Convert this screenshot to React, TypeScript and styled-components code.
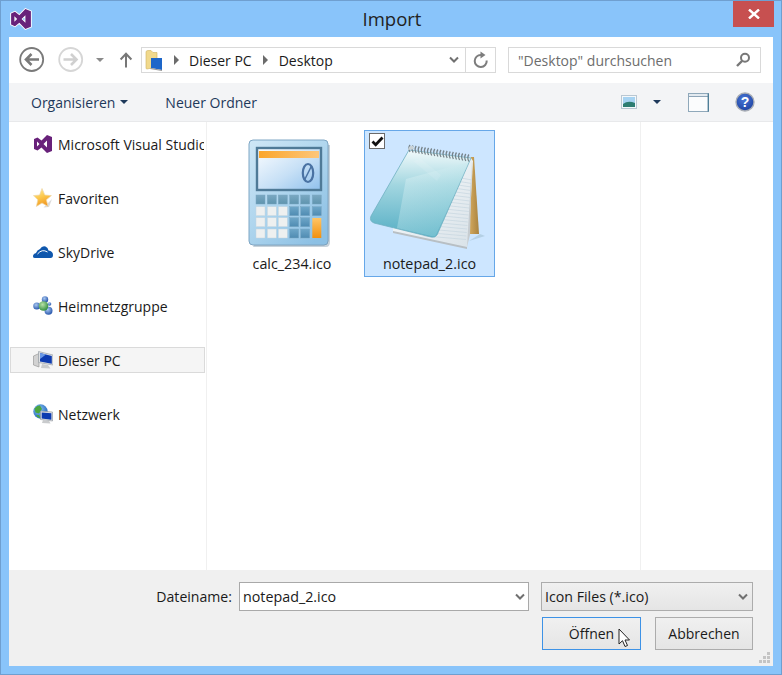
import React from "react";
import styled, { createGlobalStyle } from "styled-components";

const Global = createGlobalStyle`
  html, body { margin: 0; padding: 0; background: #fff; }
  body { font-family: "Open Sans", "Noto Sans", sans-serif; font-size: 14px; color: #1a1a1a; }
`;

const Win = styled.div`
  width: 782px; height: 675px; box-sizing: border-box; background: #89c4fa;
  border: 1px solid #6f9fd0; display: flex; flex-direction: column;
`;
const TitleBar = styled.div`
  height: 36px; flex: none; display: flex; align-items: flex-start; position: relative;
`;
const TitleIcon = styled.div`
  position: absolute; left: 9px; top: 7px; width: 22px; height: 22px; display: flex;
`;
const TitleText = styled.div`
  flex: 1; text-align: center; font-size: 18.5px; line-height: 36px; color: #222; padding-left: 2px;
`;
const CloseBtn = styled.div`
  position: absolute; right: 7px; top: 0; width: 41px; height: 26px; background: #c75050;
  display: flex; align-items: center; justify-content: center;
`;
const Client = styled.div`
  margin: 0 8px 8px 8px; flex: 1; min-height: 0; background: #fff; display: flex; flex-direction: column;
`;
const NavBar = styled.div`
  height: 46px; flex: none; display: flex; align-items: center; padding: 0 0 0 10px;
`;
const NavIcon = styled.div<{ $w: number; $ml?: number; $mr?: number }>`
  width: ${(p) => p.$w}px; height: 24px; margin-left: ${(p) => p.$ml ?? 0}px; margin-right: ${(p) => p.$mr ?? 0}px; flex: none;
  display: flex; align-items: center; justify-content: center;
`;
const Field = styled.div`
  height: 26px; box-sizing: border-box; border: 1px solid #d9d9d9; display: flex; align-items: center; background: #fff;
`;
const AddressField = styled(Field)`
  width: 355px; margin-left: 8px; flex: none;
`;
const Crumb = styled.span<{ $ml?: number }>`
  font-size: 14px; color: #1a1a1a; margin-right: 11px; margin-left: ${(p) => p.$ml ?? 0}px; white-space: nowrap;
`;
const CrumbArrow = styled.span<{ $mr?: number }>`
  width: 0; height: 0; border-left: 5px solid #6b6b6b; border-top: 5px solid transparent; border-bottom: 5px solid transparent;
  margin-right: ${(p) => p.$mr ?? 11}px; flex: none;
`;
const Spacer = styled.div`flex: 1;`;
const RefreshCell = styled.div`
  width: 29px; height: 24px; border-left: 1px solid #d9d9d9; display: flex; align-items: center; justify-content: center; flex: none;
`;
const SearchField = styled(Field)`
  width: 253px; margin-left: 12px; flex: none; padding: 0 9px 0 9px; color: #6d6d6d; font-size: 14px;
`;
const CommandBar = styled.div`
  height: 38px; flex: none; background: #f3f4f6; border-bottom: 1px solid #e8e9eb; display: flex; align-items: center; padding-left: 22px;
`;
const Command = styled.span<{ $ml?: number }>`
  font-size: 14px; color: #1e395b; white-space: nowrap; margin-left: ${(p) => p.$ml ?? 0}px;
`;
const Caret = styled.span<{ $ml: number; $c?: string }>`
  width: 0; height: 0; border-top: 4px solid ${(p) => p.$c ?? "#1e395b"}; border-left: 4px solid transparent; border-right: 4px solid transparent;
  margin-left: ${(p) => p.$ml}px; flex: none;
`;
const ToolIcon = styled.div<{ $ml: number; $mr?: number }>`
  margin-left: ${(p) => p.$ml}px; margin-right: ${(p) => p.$mr ?? 0}px; display: flex; flex: none;
`;
const Body = styled.div`
  flex: 1; min-height: 0; display: flex;
`;
const Sidebar = styled.div`
  width: 197px; flex: none; border-right: 1px solid #f0f0f0; padding-top: 9px; display: flex; flex-direction: column; gap: 28px; overflow: hidden;
`;
const SideItem = styled.div<{ $sel?: boolean }>`
  height: 26px; box-sizing: border-box; margin-left: 1px; width: 195px; display: flex; align-items: center; padding-left: 22px;
  border: 1px solid ${(p) => (p.$sel ? "#dadada" : "transparent")}; background: ${(p) => (p.$sel ? "#f5f5f5" : "transparent")};
  white-space: nowrap; overflow: hidden; font-size: 14px; color: #1a1a1a;
  span { margin-left: 5px; }
  svg { flex: none; }
`;
const Files = styled.div`
  width: 434px; box-sizing: border-box; flex: none; border-right: 1px solid #f0f0f0; padding: 8px 0 0 18px; display: flex; align-items: flex-start; gap: 8px;
`;
const FileTile = styled.div<{ $sel?: boolean }>`
  width: 131px; height: 147px; box-sizing: border-box; position: relative; display: flex; flex-direction: column; align-items: center;
  border: 1px solid ${(p) => (p.$sel ? "#66a7e8" : "transparent")}; background: ${(p) => (p.$sel ? "#cde6ff" : "transparent")};
  svg { flex: none; }
`;
const CalcSlot = styled.div`
  margin: 8px 3px 0 0; display: flex;
`;
const FileLabel = styled.div<{ $pl?: number }>`
  position: absolute; left: 0; right: 0; bottom: 3px; text-align: center; font-size: 14.3px; color: #1a1a1a; padding-left: ${(p) => p.$pl ?? 0}px;
`;
const Check = styled.div`
  position: absolute; left: 4px; top: 2px; width: 16px; height: 16px; box-sizing: border-box; border: 1px solid #6a6a6a; background: #fff;
  display: flex; align-items: center; justify-content: center;
`;
const Footer = styled.div`
  height: 96px; flex: none; background: #f0f0f0; position: relative; padding: 12px 20px 0 0; box-sizing: border-box; display: flex; flex-direction: column; align-items: flex-end; gap: 6px;
`;
const FooterRow = styled.div`
  display: flex; align-items: center;
`;
const FooterLabel = styled.span`
  font-size: 14.1px; color: #1a1a1a; margin-right: 7px;
`;
const NameInput = styled.div`
  width: 290px; height: 29px; box-sizing: border-box; border: 1px solid #a9a9a9; background: #fff; display: flex; align-items: center; justify-content: space-between;
  padding: 0 2px 0 3px; font-size: 14.3px; color: #1a1a1a;
`;
const FilterSelect = styled.div`
  width: 212px; height: 29px; box-sizing: border-box; border: 1px solid #acacac; margin-left: 12px; background: linear-gradient(#f0f0f0, #e5e5e5); display: flex; align-items: center; justify-content: space-between;
  padding: 0 3px 0 3px; font-size: 14.2px; color: #1a1a1a;
`;
const Btn = styled.div<{ $def?: boolean; $w: number; $ml?: number }>`
  width: ${(p) => p.$w}px; height: 33px; box-sizing: border-box; border: 1px solid ${(p) => (p.$def ? "#3d92e6" : "#acacac")};
  background: linear-gradient(#f0f0f0, #e5e5e5); display: flex; align-items: center; justify-content: center; margin-left: ${(p) => p.$ml ?? 0}px;
  font-size: 14px; color: #1a1a1a; position: relative;
`;
const Cursor = styled.div`
  position: absolute; left: 75px; top: 10px; display: flex;
`;
const Grip = styled.div`
  position: absolute; right: 2px; bottom: 2px; display: flex;
`;

const VS = ({ s = 18, outline }: { s?: number; outline?: boolean }) => (
  <svg width={s} height={s} viewBox="-1 -1 20 20">
    <path
      d="M13 0 L18 2 V16 L13 18 L7.5 12.5 L3.5 15.5 L0 14 V4 L3.5 2.5 L7.5 5.5 Z M13 5.5 L9.5 9 L13 12.5 Z M3 6.5 V11.5 L5.5 9 Z"
      fill="#68217a"
      fillRule="evenodd"
      stroke={outline ? "#fff" : "none"}
      strokeWidth={outline ? 1.6 : 0}
      style={{ paintOrder: "stroke" }}
    />
  </svg>
);
const Chevron = ({ c = "#707070" }: { c?: string }) => (
  <svg width="12" height="10" viewBox="0 0 12 10"><path d="M2 2.5 L6 6.5 L10 2.5" fill="none" stroke={c} strokeWidth="2" /></svg>
);
const BackCircle = () => (
  <svg width="26" height="26" viewBox="0 0 26 26">
    <circle cx="12.7" cy="12.5" r="11.5" fill="#fff" stroke="#7a7a7a" strokeWidth="1.8" />
    <path d="M20 12.5 H7.5 M12.5 7 L7 12.5 L12.5 18" fill="none" stroke="#7a7a7a" strokeWidth="2.6" />
  </svg>
);
const ForwardCircle = () => (
  <svg width="26" height="26" viewBox="0 0 26 26">
    <circle cx="12.7" cy="12.5" r="11.5" fill="#fff" stroke="#d6d6d6" strokeWidth="1.8" />
    <path d="M5.5 12.5 H18 M13 7 L18.5 12.5 L13 18" fill="none" stroke="#d0d0d0" strokeWidth="2.6" />
  </svg>
);
const Star = () => (
  <svg width="20" height="20" viewBox="0 0 20 20">
    <defs><linearGradient id="st" x1="0" y1="0" x2="0.4" y2="1"><stop offset="0" stopColor="#fff0a8" /><stop offset=".55" stopColor="#fcc84c" /><stop offset="1" stopColor="#f29a24" /></linearGradient></defs>
    <path d="M10.5 19.5 L16 19 L19 11 L13 17 Z" fill="#bbb" opacity=".55" />
    <path d="M9 0.5 L11.8 7 L18.4 7.6 L13.4 11.8 L15 18.4 L9 15 L3.4 18.4 L4.8 11.8 L0.5 7.6 L6.6 7 Z" fill="url(#st)" stroke="#efd7a6" strokeWidth=".7" />
  </svg>
);
const Cloud = () => (
  <svg width="20" height="14" viewBox="0 0 20 14">
    <path d="M0 11.5 Q0 8.5 3 8 Q4 5 7 4 Q9 0.5 12.5 1.5 Q15 2.5 15.5 5.5 Q20 6 20 10 Q20 13 17.5 13 H2 Q0 13 0 11.5 Z" fill="#0f57ad" />
    <path d="M4.5 9 Q9 3.5 14.5 7" fill="none" stroke="#fff" strokeWidth="1" />
  </svg>
);
const Home = () => (
  <svg width="20" height="20" viewBox="0 0 20 20">
    <defs>
      <radialGradient id="hb" cx=".4" cy=".35" r=".7"><stop offset="0" stopColor="#a9c8f0" /><stop offset="1" stopColor="#1f4fa8" /></radialGradient>
      <radialGradient id="hn" cx=".4" cy=".35" r=".7"><stop offset="0" stopColor="#b8e2a8" /><stop offset="1" stopColor="#2c8a3a" /></radialGradient>
    </defs>
    <circle cx="3.8" cy="10" r="3.6" fill="url(#hb)" />
    <circle cx="12" cy="3.4" r="3.2" fill="url(#hb)" />
    <circle cx="15.5" cy="14.8" r="4" fill="url(#hb)" />
    <circle cx="10.5" cy="10" r="4.8" fill="url(#hn)" />
    <circle cx="16.5" cy="8" r="1.8" fill="url(#hb)" />
  </svg>
);
const PC = () => (
  <svg width="20" height="20" viewBox="0 0 20 20">
    <path d="M0.5 6 L6 3.5 V17 L0.5 15 Z" fill="#d2d2d2" stroke="#8f8f8f" strokeWidth=".6" />
    <path d="M5.5 1.5 L20 5 V15 L5.5 12.5 Z" fill="#dfe1e4" stroke="#9aa0a8" strokeWidth=".7" />
    <path d="M7 3 L18.8 6 V13.8 L7 11.6 Z" fill="#0d3bb0" />
    <path d="M7 3 L13 4.5 L7 9 Z" fill="#6a98e6" />
    <path d="M9 14 L15 15 L17.5 18.5 L8 18 Z" fill="#c9cbcd" />
  </svg>
);
const Net = () => (
  <svg width="20" height="20" viewBox="0 0 20 20">
    <defs><radialGradient id="ng" cx=".4" cy=".35" r=".7"><stop offset="0" stopColor="#8ec6f4" /><stop offset="1" stopColor="#1b62ba" /></radialGradient></defs>
    <circle cx="7.5" cy="7.5" r="7.2" fill="url(#ng)" />
    <path d="M1.5 4.5 Q4.5 1 7 1.5 L9 5 L6 9.5 L2.5 8.5 Z M3 11 L6 11 L7.5 14.5 Q4.5 14 3 11 Z" fill="#4ca63f" />
    <path d="M7.5 7 L19.5 8 V17 L7.5 15.5 Z" fill="#dfe1e4" stroke="#8a9098" strokeWidth=".6" />
    <path d="M8.7 8.5 L18.4 9.2 V15.7 L8.7 14.5 Z" fill="#0d3bb0" />
    <path d="M10 16 L16 16.8 L17.5 19.5 L9 19 Z" fill="#c9cbcd" />
  </svg>
);
const keyXs = [8, 19.3, 30.3, 41.7, 52.7, 64.3];
const keyYs = [56, 67.7, 78.7, 90];
const Calc = () => (
  <svg width="82" height="110" viewBox="0 0 82 110">
    <defs>
      <linearGradient id="cb" x1="0" y1="0" x2="0.8" y2="1"><stop offset="0" stopColor="#cfe7f6" /><stop offset=".5" stopColor="#b0d6ee" /><stop offset="1" stopColor="#8cc0e4" /></linearGradient>
      <linearGradient id="cs" x1="0" y1="0" x2="1" y2="1"><stop offset="0" stopColor="#fbfdff" /><stop offset=".55" stopColor="#c7e0f6" /><stop offset="1" stopColor="#8fc0ec" /></linearGradient>
      <linearGradient id="ck" x1="0" y1="0" x2="0" y2="1"><stop offset="0" stopColor="#6ea6c8" /><stop offset="1" stopColor="#4f8bb2" /></linearGradient>
      <linearGradient id="cg" x1="0" y1="0" x2="0" y2="1"><stop offset="0" stopColor="#7aa8c2" /><stop offset="1" stopColor="#5f94ae" /></linearGradient>
      <linearGradient id="co" x1="0" y1="0" x2="0" y2="1"><stop offset="0" stopColor="#ffc566" /><stop offset="1" stopColor="#f1900f" /></linearGradient>
      <linearGradient id="cr" x1="0" y1="0" x2="1" y2="0"><stop offset="0" stopColor="#fba62c" /><stop offset="1" stopColor="#fdc67a" /></linearGradient>
    </defs>
    <rect x="1" y="1" width="79" height="105" rx="4" fill="url(#cb)" stroke="#7ea6c4" />
    <path d="M80 6 V102 Q80 106 76 106 H6 L5 108 H78 Q82 108 82 103 V6 Z" fill="#5d7f98" opacity=".35" />
    <rect x="9" y="9" width="64" height="42" fill="url(#cs)" stroke="#4f7a97" strokeWidth="2.4" />
    <rect x="11" y="12" width="60" height="7" fill="url(#cr)" />
    <ellipse cx="60" cy="34" rx="5.2" ry="9" fill="none" stroke="#4a72a3" strokeWidth="2.2" />
    <path d="M56.5 41 L63.5 27" stroke="#4a72a3" strokeWidth="1.5" />
    {keyYs.map((y, r) =>
      keyXs.map((x, c) => {
        if (c === 5 && r > 1) return null;
        const light = r > 0 && c < 3;
        const fill = light ? "#eef0f0" : r === 0 ? "url(#cg)" : "url(#ck)";
        return <rect key={`${r}-${c}`} x={x} y={y} width="9" height="9" fill={fill} stroke={light ? "#c4d4de" : "#7ba6c2"} strokeWidth=".5" />;
      })
    )}
    <rect x="64.3" y="79" width="9" height="20" fill="url(#co)" />
  </svg>
);
const Notepad = () => (
  <svg width="129" height="122" viewBox="0 0 129 122">
    <defs>
      <linearGradient id="nc" x1="0.35" y1="0" x2="0.35" y2="1"><stop offset="0" stopColor="#f2fafb" /><stop offset=".4" stopColor="#a2d6e0" /><stop offset="1" stopColor="#55aec4" /></linearGradient>
      <linearGradient id="no" x1="0.2" y1="0" x2="0.9" y2="1"><stop offset="0" stopColor="#e8f6f8" /><stop offset="1" stopColor="#8fd2dc" /></linearGradient>
      <linearGradient id="np" x1="0" y1="0" x2="1" y2="1"><stop offset="0" stopColor="#fbfdfe" /><stop offset="1" stopColor="#d9e2e8" /></linearGradient>
      <linearGradient id="nb" x1="0" y1="0" x2="1" y2="0"><stop offset="0" stopColor="#d9ae63" /><stop offset="1" stopColor="#a9833f" /></linearGradient>
    </defs>
    <path d="M106 26 L109 26 L114 103 L103 103 Z" fill="url(#nb)" />
    <path d="M115 103 L120 105 L104 110 Z" fill="#8faebf" opacity=".4" />
    <path d="M106 27 L108 30 L104 104 L102 117 L28 101 L28 96 Z" fill="url(#np)" />
    <path d="M28 100 L102 116 L102 118 L28 102 Z" fill="#b8bfc4" />
    <path d="M107 30 L102 116 L105 104 Z" fill="#c6ccd0" />
    {Array.from({ length: 18 }).map((_, i) => (
      <path key={i} d={`M${96 - i * 2.2} ${47 + i * 3.4} L${107 - i * 0.35} ${49 + i * 3.5}`} stroke="#c6d6df" strokeWidth=".7" />
    ))}
    <path d="M44 19 L106 27 L72 104 Q70 107 66 106 L9 92 Q4 90 6 85 Z" fill="url(#nc)" stroke="#6fb0c2" strokeWidth=".8" />
    <path d="M41 48 L104 31 L71 104 Q70 106 66 105 L32 97 Z" fill="url(#no)" opacity=".4" />
    <path d="M48 30 L72 50 L76 44 L56 28 Z" fill="#fff" opacity=".1" />
    {Array.from({ length: 20 }).map((_, i) => (
      <path key={i} d={`M${45 + i * 3.1} ${14 + i * 0.5} q-2.2 3 0 7`} fill="none" stroke="#76838a" strokeWidth="1.3" />
    ))}
    <path d="M43 19 Q44 14 48 15 L49 18 Z" fill="#c9d2d6" />
  </svg>
);
const Mag = () => (
  <svg width="16" height="16" viewBox="0 0 16 16">
    <circle cx="10" cy="5.8" r="4" fill="none" stroke="#777" strokeWidth="2" />
    <path d="M7 9 L2 14" stroke="#777" strokeWidth="2.4" />
  </svg>
);
const Refresh = () => (
  <svg width="16" height="18" viewBox="0 0 16 18">
    <path d="M13.7 9.5 A6 6 0 1 1 8 4" fill="none" stroke="#7d7d7d" strokeWidth="2" />
    <path d="M7.5 0.5 L12.5 4 L7.5 7.5 Z" fill="#7d7d7d" />
  </svg>
);
const UpArrow = () => (
  <svg width="14" height="16" viewBox="0 0 14 16"><path d="M7 15.5 V2 M1.6 7.5 L7 1.8 L12.4 7.5" fill="none" stroke="#777" strokeWidth="2" /></svg>
);
const FolderPC = () => (
  <svg width="18" height="22" viewBox="0 0 18 22">
    <path d="M1 3 Q1 1.5 3 1.5 L6 1.5 L8 3.5 L12 3.5 V18 L2 20 Q1 20 1 19 Z" fill="#f1d98c" stroke="#cfb362" strokeWidth=".6" />
    <path d="M6 9 L17 9 V21 L6 19 Z" fill="#1d66c9" />
    <path d="M6 19 L17 21 V22 L5 20 Z" fill="#999" />
  </svg>
);
const ViewPic = () => (
  <svg width="16" height="14" viewBox="0 0 16 14">
    <rect x=".5" y=".5" width="15" height="13" fill="#f4f8fb" stroke="#b9c7d2" />
    <rect x="2" y="2" width="12" height="10" fill="#a7d3f2" />
    <path d="M2 9 Q7 5 14 8 V12 H2 Z" fill="#2d7d72" />
  </svg>
);
const Pane = () => (
  <svg width="21" height="19" viewBox="0 0 21 19">
    <rect x=".5" y=".5" width="20" height="18" fill="#fbfcfd" stroke="#8fa8ba" />
    <rect x="1" y="1" width="19" height="3" fill="#e3eaf0" />
    <path d="M.5 3.5 H20" stroke="#8ea5b8" />
    <path d="M20.3 .5 V18.5" stroke="#4f7f98" strokeWidth="1.4" />
  </svg>
);
const Help = () => (
  <svg width="20" height="20" viewBox="0 0 20 20" fontFamily="Liberation Sans">
    <defs><radialGradient id="hg" cx=".45" cy=".35" r=".7"><stop offset="0" stopColor="#4a78d8" /><stop offset="1" stopColor="#1b3f9e" /></radialGradient></defs>
    <circle cx="10" cy="10" r="9" fill="url(#hg)" stroke="#a8adb5" strokeWidth="1.4" />
    <text x="10" y="15" textAnchor="middle" fontSize="14" fontWeight="700" fill="#fff">?</text>
  </svg>
);
const Pointer = () => (
  <svg width="13" height="21" viewBox="0 0 13 21">
    <path d="M1 1 V16 L4.5 12.7 L7 18.5 L9.5 17.5 L7 12 L11.5 12 Z" fill="#fff" stroke="#222" strokeWidth="1" />
  </svg>
);
const GripDots = () => (
  <svg width="12" height="12" viewBox="0 0 12 12" fill="#c4c4c4">
    <rect x="8" y="0" width="3" height="3" /><rect x="4" y="4" width="3" height="3" /><rect x="8" y="4" width="3" height="3" />
    <rect x="0" y="8" width="3" height="3" /><rect x="4" y="8" width="3" height="3" /><rect x="8" y="8" width="3" height="3" />
  </svg>
);

export default function App() {
  return (
    <>
      <Global />
      <Win>
        <TitleBar>
          <TitleIcon><VS s={22} outline /></TitleIcon>
          <TitleText>Import</TitleText>
          <CloseBtn>
            <svg width="12" height="10" viewBox="0 0 12 10"><path d="M1 .5 L11 9.5 M11 .5 L1 9.5" stroke="#fff" strokeWidth="2.4" /></svg>
          </CloseBtn>
        </TitleBar>
        <Client>
          <NavBar>
            <NavIcon $w={26}><BackCircle /></NavIcon>
            <NavIcon $w={26} $ml={13}><ForwardCircle /></NavIcon>
            <NavIcon $w={8} $ml={12}><Caret $ml={0} $c="#8a8a8a" /></NavIcon>
            <NavIcon $w={14} $ml={15}><UpArrow /></NavIcon>
            <AddressField>
              <NavIcon $w={18} $ml={3}><FolderPC /></NavIcon>
              <NavIcon $w={6} $ml={10}><CrumbArrow $mr={0} /></NavIcon>
              <Crumb $ml={10}>Dieser PC</Crumb>
              <CrumbArrow />
              <Crumb>Desktop</Crumb>
              <Spacer />
              <NavIcon $w={12} $mr={5}><Chevron /></NavIcon>
              <RefreshCell><Refresh /></RefreshCell>
            </AddressField>
            <SearchField>
              <span>"Desktop" durchsuchen</span>
              <Spacer />
              <Mag />
            </SearchField>
          </NavBar>
          <CommandBar>
            <Command>Organisieren</Command>
            <Caret $ml={5} />
            <Command $ml={37}>Neuer Ordner</Command>
            <Spacer />
            <ToolIcon $ml={0}><ViewPic /></ToolIcon>
            <Caret $ml={16} />
            <ToolIcon $ml={27}><Pane /></ToolIcon>
            <ToolIcon $ml={26} $mr={18}><Help /></ToolIcon>
          </CommandBar>
          <Body>
            <Sidebar>
              <SideItem><VS s={20} /><span>Microsoft Visual Studio</span></SideItem>
              <SideItem><Star /><span>Favoriten</span></SideItem>
              <SideItem><Cloud /><span>SkyDrive</span></SideItem>
              <SideItem><Home /><span>Heimnetzgruppe</span></SideItem>
              <SideItem $sel><PC /><span>Dieser PC</span></SideItem>
              <SideItem><Net /><span>Netzwerk</span></SideItem>
            </Sidebar>
            <Files>
              <FileTile>
                <CalcSlot><Calc /></CalcSlot>
                <FileLabel $pl={3}>calc_234.ico</FileLabel>
              </FileTile>
              <FileTile $sel>
                <Notepad />
                <Check>
                  <svg width="13" height="11" viewBox="0 0 13 11"><path d="M1.5 5.5 L4.7 8.7 L11.5 1.5" fill="none" stroke="#111" strokeWidth="2.8" /></svg>
                </Check>
                <FileLabel>notepad_2.ico</FileLabel>
              </FileTile>
            </Files>
            <Spacer />
          </Body>
          <Footer>
            <FooterRow>
              <FooterLabel>Dateiname:</FooterLabel>
              <NameInput>notepad_2.ico<Chevron /></NameInput>
              <FilterSelect>Icon Files (*.ico)<Chevron /></FilterSelect>
            </FooterRow>
            <FooterRow>
              <Btn $def $w={99}>Öffnen<Cursor><Pointer /></Cursor></Btn>
              <Btn $w={98} $ml={14}>Abbrechen</Btn>
            </FooterRow>
            <Grip><GripDots /></Grip>
          </Footer>
        </Client>
      </Win>
    </>
  );
}
